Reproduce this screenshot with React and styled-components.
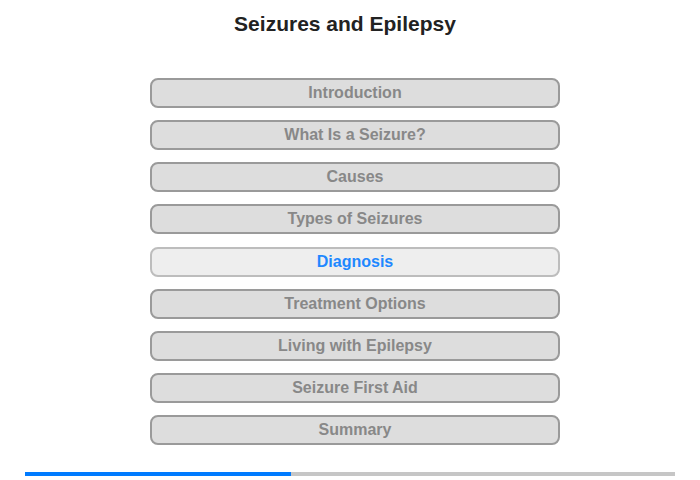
import React from "react";
import styled, { createGlobalStyle } from "styled-components";

const Global = createGlobalStyle`
  html, body { margin: 0; padding: 0; background: #fff; }
  body { font-family: "Liberation Sans", Arial, sans-serif; }
`;

const Page = styled.div`
  width: 700px;
  height: 480px;
  box-sizing: border-box;
  padding-top: 12px;
  display: flex;
  flex-direction: column;
  align-items: center;
`;

const Title = styled.h1`
  margin: 0 10px 42px 0;
  font-size: 21px;
  line-height: 24px;
  font-weight: bold;
  color: #222;
`;

const Menu = styled.nav`
  margin-left: 10px;
  display: flex;
  flex-direction: column;
  gap: 12.125px;
`;

const Item = styled.button`
  width: 410px;
  height: 30px;
  box-sizing: border-box;
  border: 2px solid ${(p) => (p.$active ? "#bdbdbd" : "#9a9a9a")};
  border-radius: 8px;
  background: ${(p) => (p.$active ? "#eeeeee" : "#dddddd")};
  color: ${(p) => (p.$active ? "#1e88ff" : "#888888")};
  font-family: "Liberation Sans", Arial, sans-serif;
  font-size: 16px;
  font-weight: bold;
  padding: 0;
  cursor: pointer;
`;

const Track = styled.div`
  margin-top: 27px;
  width: 650px;
  height: 4px;
  background: #c6c6c6;
`;

const Fill = styled.div`
  height: 100%;
  background: #007bff;
`;

const items = [
  "Introduction",
  "What Is a Seizure?",
  "Causes",
  "Types of Seizures",
  "Diagnosis",
  "Treatment Options",
  "Living with Epilepsy",
  "Seizure First Aid",
  "Summary",
];

export default function App() {
  const active = 4;
  return (
    <>
      <Global />
      <Page>
        <Title>Seizures and Epilepsy</Title>
        <Menu>
          {items.map((t, i) => (
            <Item key={t} $active={i === active}>
              {t}
            </Item>
          ))}
        </Menu>
        <Track>
          <Fill style={{ width: `${(266 / 650) * 100}%` }} />
        </Track>
      </Page>
    </>
  );
}
